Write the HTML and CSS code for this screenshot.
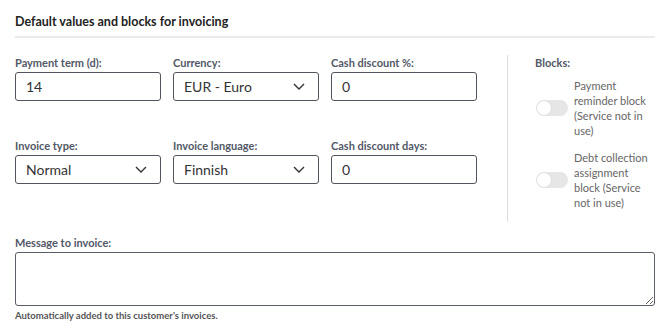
FILE: index.html
```html
<!DOCTYPE html>
<html>
    <head>
        <title>Invoicing defaults</title>
        <link rel="stylesheet" href="styles.css">
    </head>
    <body>
        <div class="panel">
            <h2 class="title">Default values and blocks for invoicing</h2>
            <div class="rule"></div>

            <div class="form-row">
                <div class="fields">
                    <div class="field">
                        <label for="term">Payment term (d):</label>
                        <input type="text" id="term" class="box" value="14">
                    </div>
                    <div class="field">
                        <label>Currency:</label>
                        <div class="box select">
                            <span>EUR - Euro</span>
                            <svg class="chevron" width="12" height="7" viewBox="0 0 12 7"><path d="M1 1 L6 6 L11 1" fill="none" stroke="#333" stroke-width="1.4"/></svg>
                        </div>
                    </div>
                    <div class="field">
                        <label for="disc">Cash discount %:</label>
                        <input type="text" id="disc" class="box" value="0">
                    </div>
                    <div class="field">
                        <label>Invoice type:</label>
                        <div class="box select">
                            <span>Normal</span>
                            <svg class="chevron" width="12" height="7" viewBox="0 0 12 7"><path d="M1 1 L6 6 L11 1" fill="none" stroke="#333" stroke-width="1.4"/></svg>
                        </div>
                    </div>
                    <div class="field">
                        <label>Invoice language:</label>
                        <div class="box select">
                            <span>Finnish</span>
                            <svg class="chevron" width="12" height="7" viewBox="0 0 12 7"><path d="M1 1 L6 6 L11 1" fill="none" stroke="#333" stroke-width="1.4"/></svg>
                        </div>
                    </div>
                    <div class="field">
                        <label for="days">Cash discount days:</label>
                        <input type="text" id="days" class="box" value="0">
                    </div>
                </div>

                <div class="divider"></div>

                <div class="blocks">
                    <label>Blocks:</label>
                    <div class="block-item">
                        <span class="toggle"></span>
                        <span class="block-text">Payment reminder block (Service not in use)</span>
                    </div>
                    <div class="block-item">
                        <span class="toggle"></span>
                        <span class="block-text">Debt collection assignment block (Service not in use)</span>
                    </div>
                </div>
            </div>

            <div class="message">
                <label for="msg">Message to invoice:</label>
                <textarea id="msg" class="box"></textarea>
                <div class="help">Automatically added to this customer's invoices.</div>
            </div>
        </div>
    </body>
</html>
```

FILE: styles.css
```css
body {
    margin: 0;
    background: #fff;
    font-family: Lato, "Noto Sans", sans-serif;
    color: #333;
}

.panel {
    padding: 13px 15px 0 15px;
    width: 640px;
}

.title {
    margin: 0;
    font-size: 12.5px;
    line-height: 18px;
    font-weight: 700;
    color: #222;
}

.rule {
    height: 2px;
    background-color: #ebebeb;
    margin-top: 5px;
}

label {
    display: block;
    font-size: 11px;
    line-height: 15px;
    font-weight: 700;
    color: #525866;
    margin-bottom: 2px;
}

.form-row {
    display: flex;
    margin-top: 17px;
}

.fields {
    display: grid;
    grid-template-columns: repeat(3, 146px);
    column-gap: 12px;
    row-gap: 37px;
    align-content: start;
}

.box {
    box-sizing: border-box;
    width: 100%;
    height: 29px;
    border: 1px solid #50545c;
    border-radius: 3px;
    background: #fff;
    font-family: inherit;
    font-size: 14px;
    color: #333;
    padding: 0 10px;
    margin: 0;
    outline: none;
}

.select {
    display: flex;
    align-items: center;
    justify-content: space-between;
    padding-right: 13px;
}

.chevron {
    display: block;
}

.divider {
    width: 1px;
    background-color: #dcdcdc;
    margin-left: 30px;
}

.blocks {
    padding-left: 27px;
    padding-bottom: 12px;
    width: 120px;
}

.blocks label {
    margin-bottom: 8px;
}

.block-item {
    display: flex;
    align-items: center;
    margin-bottom: 12px;
}

.block-item:last-child {
    margin-bottom: 0;
}

.toggle {
    position: relative;
    flex: none;
    width: 32px;
    height: 16px;
    border-radius: 8px;
    background-color: #e6e6e6;
    margin-left: 1px;
    margin-right: 6px;
}

.toggle:before {
    position: absolute;
    content: "";
    width: 14px;
    height: 14px;
    left: 1px;
    top: 1px;
    border-radius: 50%;
    background-color: #fff;
    box-shadow: 0 0 1px rgba(0, 0, 0, 0.15);
}

.block-text {
    font-size: 11px;
    line-height: 15px;
    color: #666;
}

.message {
    margin-top: 13px;
}

.message textarea {
    display: block;
    height: 54px;
    resize: vertical;
    border-color: #5a5e66;
}

.help {
    font-size: 9.5px;
    font-weight: 700;
    color: #555;
    margin-top: 4px;
}
```
